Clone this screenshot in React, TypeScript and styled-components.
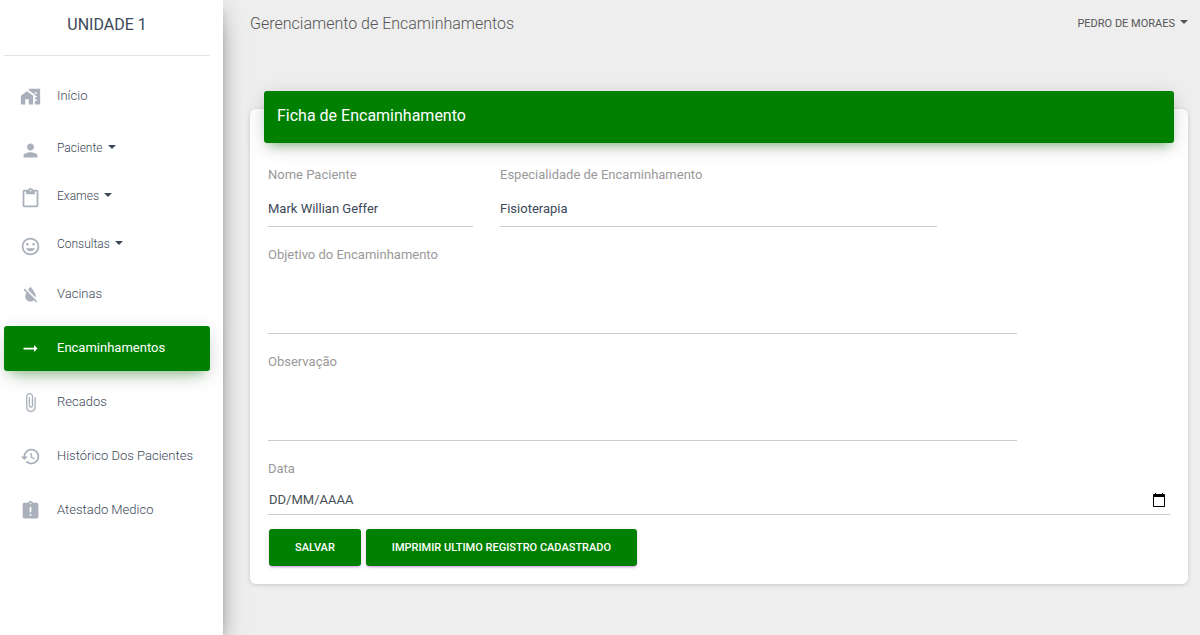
import React from "react";
import styled, { createGlobalStyle, css } from "styled-components";
import {
  MdHomeWork,
  MdPerson,
  MdContentPaste,
  MdTagFaces,
  MdFormatColorReset,
  MdArrowRightAlt,
  MdAttachFile,
  MdHistory,
  MdAssignmentLate,
} from "react-icons/md";

const GlobalStyle = createGlobalStyle`
  *, *::before, *::after { box-sizing: border-box; }
  body {
    margin: 0;
    background: #eeeeee;
    color: #3c4858;
    font-family: Roboto, "Liberation Sans", sans-serif;
    font-size: 13px;
    line-height: 20px;
  }
  button, input, textarea { font: inherit; color: inherit; }
`;

const Page = styled.div`
  display: flex;
  min-height: 100vh;
`;

const Sidebar = styled.aside`
  position: relative;
  z-index: 1;
  flex: 0 0 223px;
  padding: 0 13px 0 4px;
  background: #ffffff;
  box-shadow: 0 14px 26px -10px rgba(0, 0, 0, 0.56),
    0 4px 20px 0 rgba(0, 0, 0, 0.12), 0 7px 9px -4px rgba(0, 0, 0, 0.2);
`;

const Brand = styled.a`
  display: block;
  padding: 13px 0 18px;
  border-bottom: 1px solid #e4e4e4;
  color: #3c4858;
  font-size: 16px;
  line-height: 24px;
  text-align: center;
  text-decoration: none;
`;

const Menu = styled.ul`
  list-style: none;
  margin: 0;
  padding: 18px 0 0;
`;

const MenuItem = styled.li<{ $compact?: boolean }>`
  height: ${(p) => (p.$compact ? 48 : 54)}px;
`;

const MenuLink = styled.a<{ $active?: boolean }>`
  display: flex;
  align-items: center;
  gap: 16px;
  height: 45px;
  padding: 0 16px;
  border-radius: 3px;
  color: #3c4858;
  font-weight: 300;
  text-decoration: none;
  ${(p) =>
    p.$active &&
    css`
      background: #008000;
      color: #ffffff;
      font-weight: 400;
      box-shadow: 0 12px 20px -10px rgba(0, 128, 0, 0.28),
        0 4px 20px 0 rgba(0, 0, 0, 0.12), 0 7px 8px -5px rgba(0, 128, 0, 0.2);
    `}
  svg {
    flex: none;
    width: 21px;
    height: 21px;
    color: ${(p) => (p.$active ? "#ffffff" : "#a9afbb")};
  }
`;

const MenuText = styled.span<{ $compact?: boolean }>`
  padding-bottom: ${(p) => (p.$compact ? 6 : 2)}px;
  font-size: ${(p) => (p.$compact ? 12 : 13)}px;
`;

const Caret = styled.span`
  display: inline-block;
  margin-left: 5px;
  border: 4px solid transparent;
  border-top-color: currentColor;
  border-bottom: 0;
  vertical-align: 3px;
`;

const Main = styled.main`
  flex: 1;
  min-width: 0;
  padding: 0 12px 50px 27px;
`;

const TopBar = styled.header`
  display: flex;
  align-items: center;
  justify-content: space-between;
  height: 48px;
  color: #555555;
`;

const PageTitle = styled.h1`
  margin: 0;
  font-size: 16px;
  font-weight: 300;
  line-height: 24px;
`;

const UserButton = styled.button`
  padding: 0;
  border: 0;
  background: none;
  font-size: 11px;
  text-transform: uppercase;
  cursor: pointer;
`;

const Card = styled.section`
  display: flow-root;
  margin-top: 61px;
  padding: 0 14px 18px;
  border-radius: 6px;
  background: #ffffff;
  box-shadow: 0 1px 4px 0 rgba(0, 0, 0, 0.16);
`;

const CardHeader = styled.header`
  margin: -18px 0 18px;
  padding: 13px 13px 15px;
  border-radius: 3px;
  background: #008000;
  color: #ffffff;
  box-shadow: 0 4px 20px 0 rgba(0, 0, 0, 0.14),
    0 7px 10px -5px rgba(0, 128, 0, 0.4);
`;

const CardTitle = styled.h2`
  margin: 0;
  font-size: 16px;
  font-weight: 400;
  line-height: 24px;
`;

const Form = styled.form`
  padding: 4px 4px 0;
`;

const Row = styled.div`
  display: flex;
  gap: 27px;
`;

const Field = styled.div<{ $width: string }>`
  display: flex;
  flex-direction: column;
  width: ${(p) => p.$width};
`;

const Label = styled.label`
  color: #999999;
  line-height: 20px;
`;

const line = css`
  display: block;
  width: 100%;
  padding: 0;
  border: 0;
  border-bottom: 1px solid #cccccc;
  border-radius: 0;
  background: transparent;
  outline: none;
`;

const TextInput = styled.input`
  ${line}
  height: 42px;
  margin-bottom: 18px;
  padding-top: 6px;
`;

const TextArea = styled.textarea`
  ${line}
  height: 69px;
  margin-bottom: 18px;
  resize: none;
`;

const DateBox = styled.div`
  ${line}
  display: flex;
  align-items: center;
  height: 36px;
  padding: 7px 4px 0 1px;
`;

const DateInput = styled.input`
  flex: 1;
  min-width: 0;
  padding: 0;
  border: 0;
  background: none;
  outline: none;
  &::placeholder {
    color: #495057;
    opacity: 1;
  }
`;

const IconButton = styled.button`
  display: flex;
  padding: 0;
  border: 0;
  background: none;
  color: #000000;
`;

const Actions = styled.div`
  display: flex;
  gap: 5px;
  padding: 14px 1px 0;
`;

const Button = styled.button`
  height: 37px;
  padding: 0 26px;
  border: 0;
  border-radius: 3px;
  background: #008000;
  color: #ffffff;
  font-size: 11px;
  font-weight: 500;
  text-transform: uppercase;
  box-shadow: 0 2px 2px 0 rgba(156, 39, 176, 0.14),
    0 3px 1px -2px rgba(156, 39, 176, 0.2), 0 1px 5px 0 rgba(156, 39, 176, 0.12);
  cursor: pointer;
`;

const items = [
  { label: "Início", Icon: MdHomeWork },
  { label: "Paciente", Icon: MdPerson, dropdown: true },
  { label: "Exames", Icon: MdContentPaste, dropdown: true },
  { label: "Consultas", Icon: MdTagFaces, dropdown: true },
  { label: "Vacinas", Icon: MdFormatColorReset },
  { label: "Encaminhamentos", Icon: MdArrowRightAlt, active: true },
  { label: "Recados", Icon: MdAttachFile },
  { label: "Histórico Dos Pacientes", Icon: MdHistory },
  { label: "Atestado Medico", Icon: MdAssignmentLate },
];

const CalendarIcon = () => (
  <svg width="14" height="14" viewBox="0 0 14 14" aria-hidden="true">
    <path
      fill="currentColor"
      d="M3 0h1v1h6V0h1v1h1.200Q13 1 13 1.800V13.200Q13 14 12.200 14H1.800Q1 14 1 13.200V1.800Q1 1 1.800 1H3zM2 4v9h10V4z"
    />
  </svg>
);

export default function App() {
  return (
    <Page>
      <GlobalStyle />
      <Sidebar>
        <Brand href="#">UNIDADE 1</Brand>
        <nav>
          <Menu>
            {items.map(({ label, Icon, dropdown, active }) => (
              <MenuItem key={label} $compact={dropdown}>
                <MenuLink href="#" $active={active}>
                  <Icon />
                  <MenuText $compact={dropdown}>
                    {label}
                    {dropdown && <Caret />}
                  </MenuText>
                </MenuLink>
              </MenuItem>
            ))}
          </Menu>
        </nav>
      </Sidebar>
      <Main>
        <TopBar>
          <PageTitle>Gerenciamento de Encaminhamentos</PageTitle>
          <UserButton type="button">
            Pedro de Moraes
            <Caret />
          </UserButton>
        </TopBar>
        <Card>
          <CardHeader>
            <CardTitle>Ficha de Encaminhamento</CardTitle>
          </CardHeader>
          <Form onSubmit={(e) => e.preventDefault()}>
            <Row>
              <Field $width="205px">
                <Label htmlFor="nome">Nome Paciente</Label>
                <TextInput id="nome" defaultValue="Mark Willian Geffer" />
              </Field>
              <Field $width="437px">
                <Label htmlFor="especialidade">Especialidade de Encaminhamento</Label>
                <TextInput id="especialidade" defaultValue="Fisioterapia" />
              </Field>
            </Row>
            <Field $width="83%">
              <Label htmlFor="objetivo">Objetivo do Encaminhamento</Label>
              <TextArea id="objetivo" />
            </Field>
            <Field $width="83%">
              <Label htmlFor="observacao">Observação</Label>
              <TextArea id="observacao" />
            </Field>
            <Field $width="100%">
              <Label htmlFor="data">Data</Label>
              <DateBox>
                <DateInput id="data" placeholder="DD/MM/AAAA" />
                <IconButton type="button" aria-label="Abrir calendário">
                  <CalendarIcon />
                </IconButton>
              </DateBox>
            </Field>
            <Actions>
              <Button type="submit">Salvar</Button>
              <Button type="button">Imprimir ultimo registro cadastrado</Button>
            </Actions>
          </Form>
        </Card>
      </Main>
    </Page>
  );
}
